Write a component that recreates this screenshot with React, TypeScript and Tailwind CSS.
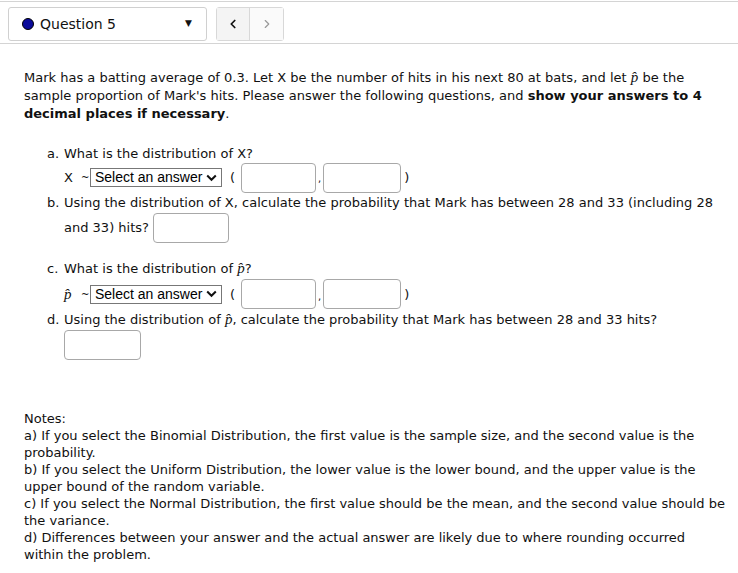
import { ChevronLeft, ChevronRight } from "lucide-react";

function Hat() {
  return (
    <i className="text-[15px] leading-[0]" style={{ fontFamily: '"Liberation Serif", serif' }}>
      p̂
    </i>
  );
}

function Box({ w = "w-[76px]" }: { w?: string }) {
  return <span className={`inline-block ${w} h-[30px] align-middle rounded-[4px] border border-[#a8a8a8] bg-white`} />;
}

function Choice() {
  return (
    <span className="inline-flex items-center h-[19px] w-[132px] border border-[#777] px-[4px] align-middle text-[14px] text-black" style={{ fontFamily: '"Liberation Sans", Arial, sans-serif' }}>
      <span>Select an answer</span>
      <svg className="ml-auto" width="11" height="8" viewBox="0 0 11 8">
        <path d="M1.2 1.5 L5.5 5.8 L9.8 1.5" stroke="#111" strokeWidth="2" fill="none" />
      </svg>
    </span>
  );
}

function DistRow({ sym, h }: { sym: React.ReactNode; h: string }) {
  return (
    <div className={`flex items-center ${h} ml-[17px]`}>
      <span className="w-[17px]">{sym}</span>
      <span className="w-[9px] text-[10px]">~</span>
      <Choice />
      <span className="ml-[8px] mr-[6px]">(</span>
      <Box w="w-[75px]" />
      <span className="mx-[2px] self-end mb-[6px] text-[10px]">,</span>
      <Box w="w-[78px]" />
      <span className="ml-[3px]">)</span>
    </div>
  );
}

export default function App() {
  return (
    <div className="w-[738px] h-[573px] bg-white text-[#111] text-[13px] leading-[17px]" style={{ fontFamily: '"DejaVu Sans", Tahoma, sans-serif' }}>
      <div className="border-t border-b border-[#d4d4d4] mt-[1px] h-[43px] flex items-center pl-[8px] pt-[2px]">
        <div className="w-[199px] h-[34px] border border-[#d0d0d0] rounded-[3px] flex items-center px-[13px]">
          <span className="w-[12px] h-[12px] rounded-full bg-[#0a0a9a] border border-black mr-[6px]" />
          <span className="text-[14px] mt-[2px]">Question 5</span>
          <span className="ml-auto mr-[1px] text-[9px]">▼</span>
        </div>
        <div className="ml-[9px] flex h-[34px] border border-[#d8d8d8] rounded-[3px]">
          <div className="w-[33px] bg-[#f4f4f4] border-r border-[#d8d8d8] flex items-center justify-center">
            <ChevronLeft size={14} strokeWidth={3} color="#111" />
          </div>
          <div className="w-[33px] bg-[#fafafa] flex items-center justify-center">
            <ChevronRight size={14} strokeWidth={2} color="#999" />
          </div>
        </div>
      </div>

      <div className="pl-[24px] pr-[8px] pt-[25px]">
        <p className="leading-[18px] pr-[8px]">
          Mark has a batting average of 0.3. Let X be the number of hits in his next 80 at bats, and let <Hat /> be the sample proportion of Mark's hits. Please answer the following questions, and <b>show your answers to 4 decimal places if necessary</b>.
        </p>

        <div className="mt-[22px] pl-[23px]">
          <div className="flex"><span className="w-[17px]">a.</span><span>What is the distribution of X?</span></div>
          <DistRow sym={<span>X</span>} h="h-[31px]" />
          <div className="flex leading-[20px]">
            <span className="w-[17px] shrink-0">b.</span>
            <div>
              Using the distribution of X, calculate the probability that Mark has between 28 and 33 (including 28 and 33) hits? <Box />
            </div>
          </div>
          <div className="flex mt-[17px]"><span className="w-[17px]">c.</span><span>What is the distribution of <Hat />?</span></div>
          <DistRow sym={<Hat />} h="h-[34px]" />
          <div className="flex">
            <span className="w-[17px] shrink-0">d.</span>
            <div>
              Using the distribution of <Hat />, calculate the probability that Mark has between 28 and 33 hits?
              <div className="mt-[2px]"><Box w="w-[77px]" /></div>
            </div>
          </div>
        </div>

        <div className="mt-[50px]">
          <p>Notes:</p>
          <p>a) If you select the Binomial Distribution, the first value is the sample size, and the second value is the probability.</p>
          <p>b) If you select the Uniform Distribution, the lower value is the lower bound, and the upper value is the upper bound of the random variable.</p>
          <p>c) If you select the Normal Distribution, the first value should be the mean, and the second value should be the variance.</p>
          <p className="pr-[12px]">d) Differences between your answer and the actual answer are likely due to where rounding occurred within the problem.</p>
        </div>
      </div>
    </div>
  );
}
